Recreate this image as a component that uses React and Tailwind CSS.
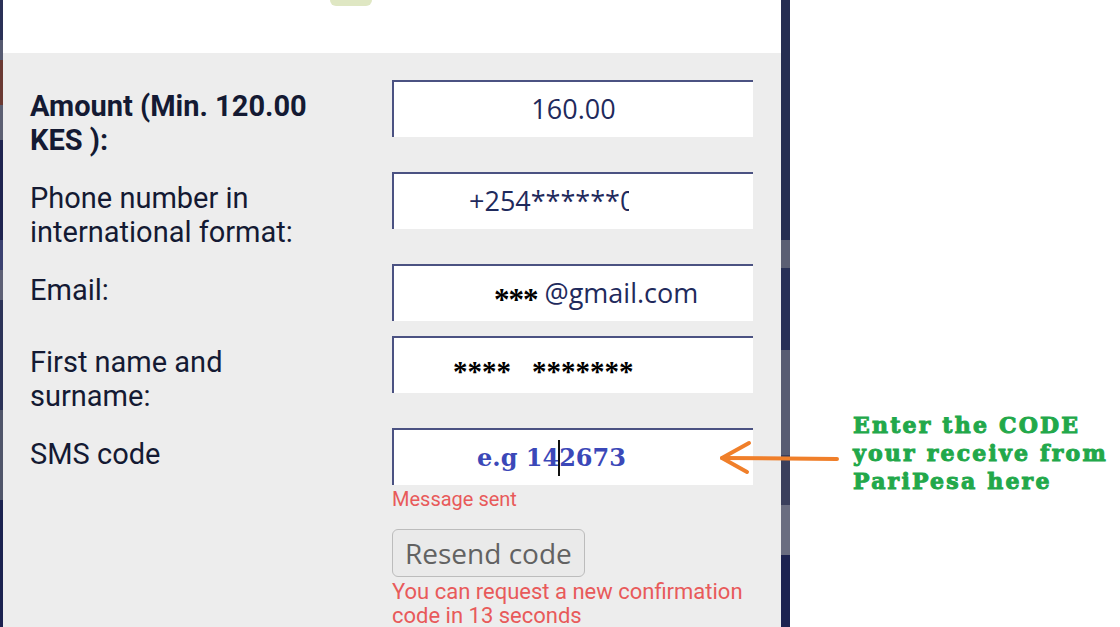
import React from 'react';

const labelFont = { fontFamily: 'Roboto, "Liberation Sans", sans-serif' };
const inputFont = { fontFamily: '"Open Sans", "Liberation Sans", sans-serif' };
const slabFont = { fontFamily: '"DejaVu Serif", "Liberation Serif", serif' };
const starFont = { fontFamily: '"Liberation Serif", serif' };

const Field = ({ children, className = '' }) => (
    <div
        className={`h-[57px] bg-white border-t-2 border-l-2 border-[#4b5282] flex items-center text-[27px] text-[#1f2a5c] ${className}`}
        style={inputFont}
    >
        {children}
    </div>
);

const Label = ({ children, bold }) => (
    <div className={`pt-[9px] w-[300px] text-[29px] leading-[34px] text-[#141a33] ${bold ? 'font-bold' : ''}`} style={labelFont}>
        {children}
    </div>
);

const App = () => {
    return (
        <div className="relative w-[1120px] h-[627px] flex overflow-hidden bg-white">
            {/* page behind the modal, left edge */}
            <div className="w-[3px] shrink-0 flex flex-col">
                <div className="h-[40px] bg-[#2a3157]" />
                <div className="h-[20px] bg-[#565a70]" />
                <div className="h-[45px] bg-[#6b3a33]" />
                <div className="h-[35px] bg-[#5c5f72]" />
                <div className="h-[100px] bg-[#1f2450]" />
                <div className="h-[30px] bg-[#3b4170]" />
                <div className="h-[30px] bg-[#5d6075]" />
                <div className="h-[110px] bg-[#2c3358]" />
                <div className="h-[90px] bg-[#50556a]" />
                <div className="flex-1 bg-[#1c2250]" />
            </div>

            {/* modal */}
            <div className="w-[778px] shrink-0 flex flex-col bg-[#ededed]">
                <div className="h-[53px] shrink-0 bg-white pl-[327px]">
                    <div className="w-[42px] h-[6px] bg-[#dfe7c3] rounded-b-[6px]" />
                </div>

                <div className="pt-[27px] pl-[27px] grid grid-cols-[362px_361px] gap-y-[15px] items-start">
                    <Label bold>Amount (Min. 120.00 KES ):</Label>
                    <Field className="justify-center">160.00</Field>

                    <Label>Phone number in international format:</Label>
                    <Field className="pl-[75px]">
                        <span className="w-[160px] overflow-hidden whitespace-nowrap">+254******0712</span>
                    </Field>

                    <Label>Email:</Label>
                    <Field className="pl-[100px]">
                        <span className="text-black font-bold text-[31px] tracking-[-1px] translate-y-[7px]" style={starFont}>***</span>
                        <span className="ml-[7px]">@gmail.com</span>
                    </Field>

                    <Label>First name and surname:</Label>
                    <Field className="pl-[59px] text-black font-bold">
                        <span className="text-[29px] translate-y-[6px]" style={starFont}>****</span>
                        <span className="ml-[21px] text-[29px] translate-y-[6px]" style={starFont}>*******</span>
                    </Field>

                    <Label>SMS code</Label>
                    <div className="flex flex-col items-start">
                        <Field className="w-full pl-[83px]">
                            <span className="font-bold text-[24px] text-[#3b48b8] flex items-center" style={slabFont}>
                                e.g 14<span className="w-[2px] h-[36px] bg-[#111] -mx-[1px]" />2673
                            </span>
                        </Field>
                        <div className="mt-[1px] text-[20px] leading-[26px] text-[#e85a5a]" style={labelFont}>Message sent</div>
                        <button
                            className="mt-[17px] h-[48px] px-[12px] border border-[#bcbcbc] rounded-[6px] bg-[#eaeaea] text-[28px] text-[#626262] leading-none"
                            style={inputFont}
                        >
                            Resend code
                        </button>
                        <div className="mt-[3px] text-[22px] leading-[24px] text-[#e85a5a]" style={labelFont}>
                            You can request a new confirmation code in 13 seconds
                        </div>
                    </div>
                </div>
            </div>

            {/* page behind the modal, right edge */}
            <div className="w-[9px] shrink-0 flex flex-col">
                <div className="h-[240px] bg-[#262e52]" />
                <div className="h-[28px] bg-[#5b5f73]" />
                <div className="h-[82px] bg-[#283056]" />
                <div className="h-[105px] bg-[#585c72]" />
                <div className="h-[50px] bg-[#3a3f5c]" />
                <div className="h-[50px] bg-[#6a6d80]" />
                <div className="flex-1 bg-[#1d2350]" />
            </div>

            {/* annotation */}
            <div className="flex-1 pl-[63px] pt-[411px]">
                <div
                    className="font-bold text-[22px] leading-[28px] tracking-[2.2px] text-[#22a84a] [-webkit-text-stroke:1px_#22a84a]"
                    style={slabFont}
                >
                    Enter the CODE<br />
                    your receive from<br />
                    PariPesa here
                </div>
            </div>

            <svg className="absolute left-[716px] top-[436px]" width="128" height="44" viewBox="0 0 128 44">
                <g stroke="#f07f2a" strokeWidth="4" strokeLinecap="round" fill="none">
                    <path d="M6 22 L121 23" />
                    <path d="M33 7 L6 22 L31 36" strokeLinejoin="round" />
                </g>
            </svg>
        </div>
    );
};

export default App;
